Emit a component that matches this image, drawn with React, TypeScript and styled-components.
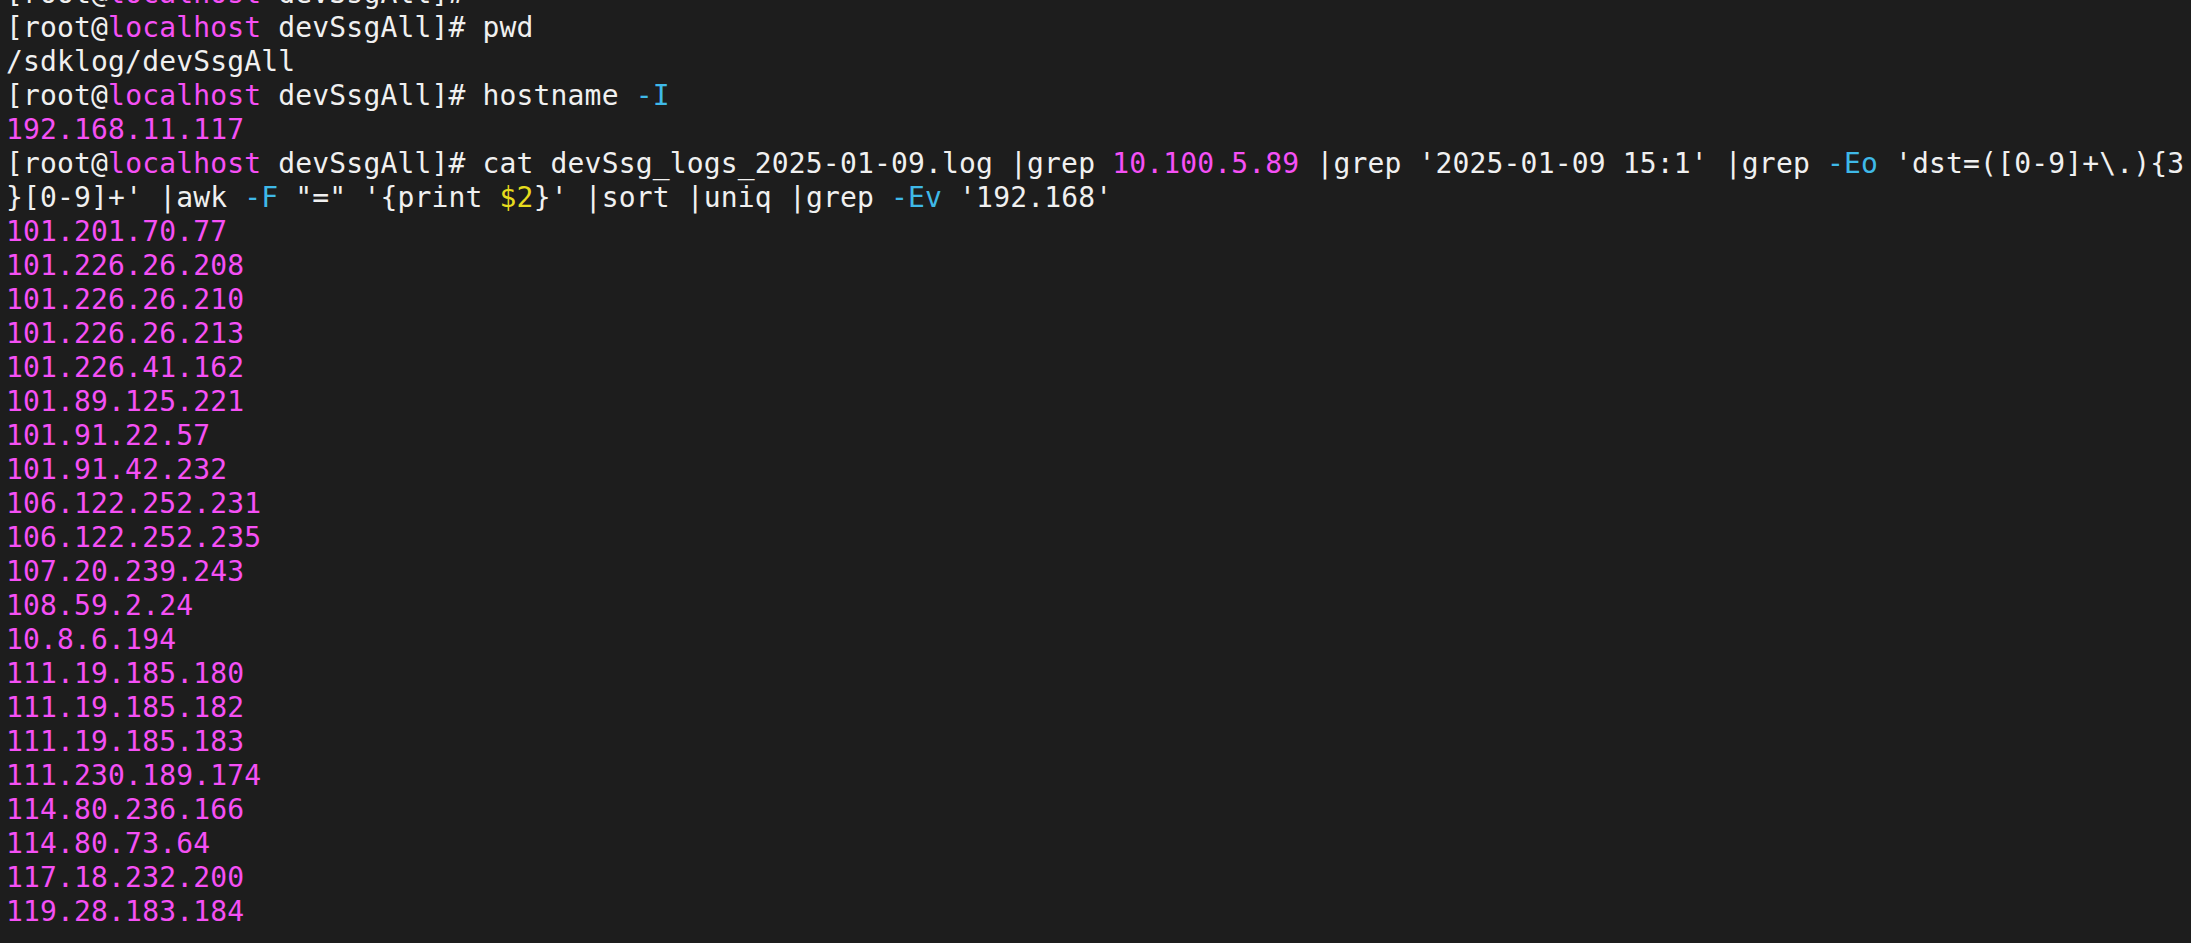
import React from "react";
import styled, { createGlobalStyle } from "styled-components";

const Global = createGlobalStyle`
  html, body {
    margin: 0;
    padding: 0;
    background: #1d1d1d;
  }
  #root {
    width: 2191px;
    height: 943px;
  }
`;

const Viewport = styled.div`
  width: 2191px;
  height: 943px;
  overflow: hidden;
  background: #1d1d1d;
`;

const Screen = styled.div`
  display: flex;
  flex-direction: column;
  margin-top: -23px;
  padding-left: 6px;
  font-family: "DejaVu Sans Mono", "Liberation Mono", monospace;
  font-size: 28px;
  letter-spacing: 0.16px;
  line-height: 34px;
  color: #f0f0f0;
`;

const Line = styled.div`
  white-space: pre;
  height: 34px;
`;

type Tone = "host" | "flag" | "num" | "var" | "ip";

const colors: Record<Tone, string> = {
  host: "#f550f5",
  flag: "#3fb9e8",
  num: "#f550f5",
  var: "#e6dc1e",
  ip: "#f550f5",
};

const Span = styled.span<{ $tone: Tone }>`
  color: ${(p) => colors[p.$tone]};
`;

const Prompt: React.FC = () => (
  <>
    [root@<Span $tone="host">localhost</Span> devSsgAll]#
  </>
);

const ips = [
  "101.201.70.77",
  "101.226.26.208",
  "101.226.26.210",
  "101.226.26.213",
  "101.226.41.162",
  "101.89.125.221",
  "101.91.22.57",
  "101.91.42.232",
  "106.122.252.231",
  "106.122.252.235",
  "107.20.239.243",
  "108.59.2.24",
  "10.8.6.194",
  "111.19.185.180",
  "111.19.185.182",
  "111.19.185.183",
  "111.230.189.174",
  "114.80.236.166",
  "114.80.73.64",
  "117.18.232.200",
  "119.28.183.184",
];

export default function App() {
  return (
    <Viewport>
      <Global />
      <Screen>
        <Line>
          <Prompt />
        </Line>
        <Line>
          <Prompt /> pwd
        </Line>
        <Line>/sdklog/devSsgAll</Line>
        <Line>
          <Prompt /> hostname <Span $tone="flag">-I</Span>
        </Line>
        <Line>
          <Span $tone="ip">192.168.11.117</Span>
        </Line>
        <Line>
          <Prompt /> cat devSsg_logs_2025-01-09.log |grep{" "}
          <Span $tone="num">10.100.5.89</Span> |grep '2025-01-09 15:1' |grep{" "}
          <Span $tone="flag">-Eo</Span> 'dst=([0-9]+\.){"{"}3
        </Line>
        <Line>
          {"}"}[0-9]+' |awk <Span $tone="flag">-F</Span> "=" '{"{"}print{" "}
          <Span $tone="var">$2</Span>
          {"}"}' |sort |uniq |grep <Span $tone="flag">-Ev</Span> '192.168'
        </Line>
        {ips.map((ip) => (
          <Line key={ip}>
            <Span $tone="ip">{ip}</Span>
          </Line>
        ))}
      </Screen>
    </Viewport>
  );
}
